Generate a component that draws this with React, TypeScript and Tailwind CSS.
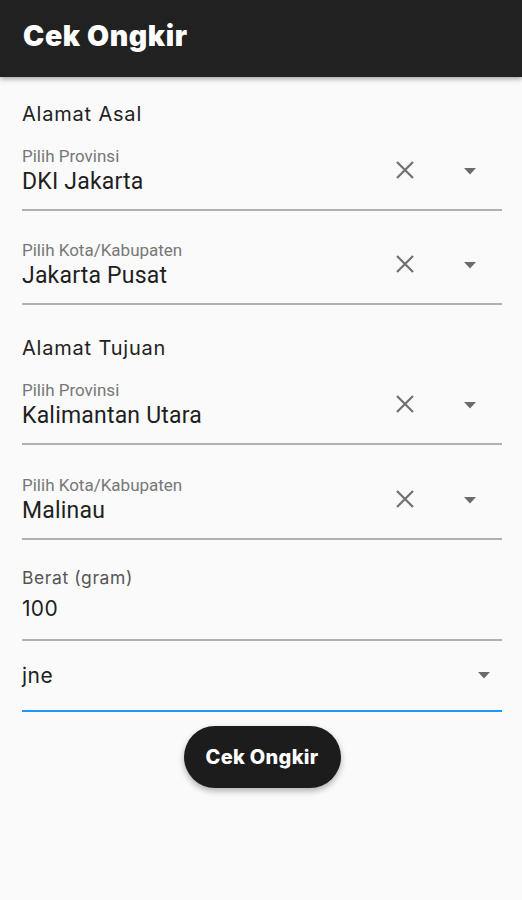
import React from "react";

const poppins = { fontFamily: "Inter, 'Noto Sans', sans-serif" };

function ClearIcon() {
  return (
    <svg width="20" height="20" viewBox="0 0 20 20" className="block">
      <path d="M2 2 L18 18 M18 2 L2 18" stroke="#707070" strokeWidth="2.2" strokeLinecap="butt" />
    </svg>
  );
}

function Arrow() {
  return (
    <svg width="12" height="7" viewBox="0 0 12 7" className="block">
      <path d="M0 0 L12 0 L6 6.5 Z" fill="#6b6b6b" />
    </svg>
  );
}

function DropField({ label, value }: { label: string; value: string }) {
  return (
    <div className="flex flex-col">
      <div className="flex items-center">
        <div className="flex-1 flex flex-col" style={{ fontFamily: "Roboto, sans-serif" }}>
          <div className="h-[18px] leading-[18px] text-[17px] text-[#777777] whitespace-nowrap">{label}</div>
          <div className="h-[26px] leading-[26px] text-[23px] tracking-[0.2px] text-[#1f1f1f] mt-[4px] whitespace-nowrap">{value}</div>
        </div>
        <div className="w-[20px] h-[20px] mr-[49px] mt-[-2px]">
          <ClearIcon />
        </div>
        <div className="w-[12px] mr-[26px]">
          <Arrow />
        </div>
      </div>
      <div className="h-[2px] bg-[#b0b0b0] mt-[14px]" />
    </div>
  );
}

export default function App() {
  return (
    <div className="min-h-[900px] bg-[#fafafa]">
      <div className="h-[77px] bg-[#212121] flex items-center px-[23px] shadow-[0_2px_5px_rgba(0,0,0,0.35)] relative">
        <span className="text-white text-[28.5px] font-black tracking-[0.6px] mt-[-4px]" style={poppins}>
          Cek Ongkir
        </span>
      </div>
      <div className="pl-[22px] pr-[20px] flex flex-col">
        <div className="mt-[25px] h-[24px] leading-[24px] text-[20px] tracking-[0.8px] text-[#222222]" style={poppins}>
          Alamat Asal
        </div>
        <div className="mt-[21px]">
          <DropField label="Pilih Provinsi" value="DKI Jakarta" />
        </div>
        <div className="mt-[30px]">
          <DropField label="Pilih Kota/Kabupaten" value="Jakarta Pusat" />
        </div>
        <div className="mt-[31px] h-[24px] leading-[24px] text-[20px] tracking-[0.8px] text-[#222222]" style={poppins}>
          Alamat Tujuan
        </div>
        <div className="mt-[21px]">
          <DropField label="Pilih Provinsi" value="Kalimantan Utara" />
        </div>
        <div className="mt-[31px]">
          <DropField label="Pilih Kota/Kabupaten" value="Malinau" />
        </div>
        <div className="mt-[29px] flex flex-col" style={poppins}>
          <div className="h-[18px] leading-[18px] text-[17.5px] tracking-[0.6px] text-[#555555]">Berat (gram)</div>
          <div className="h-[26px] leading-[26px] text-[21px] tracking-[0.3px] text-[#1f1f1f] mt-[9px]">100</div>
          <div className="h-[2px] bg-[#b0b0b0] mt-[17px]" />
        </div>
        <div className="flex items-center h-[69px]" style={poppins}>
          <span className="flex-1 text-[21px] tracking-[0.5px] text-[#1f1f1f] leading-[26px]">jne</span>
          <div className="mr-[12px]">
            <Arrow />
          </div>
        </div>
        <div className="h-[2px] bg-[#2196f3]" />
        <div className="flex justify-center mt-[14px]">
          <button
            className="w-[157px] h-[62px] rounded-full bg-[#1c1c1c] text-white text-[20px] font-extrabold shadow-[0_3px_6px_rgba(0,0,0,0.3)] tracking-[0.3px]"
            style={poppins}
          >
            Cek Ongkir
          </button>
        </div>
      </div>
    </div>
  );
}
